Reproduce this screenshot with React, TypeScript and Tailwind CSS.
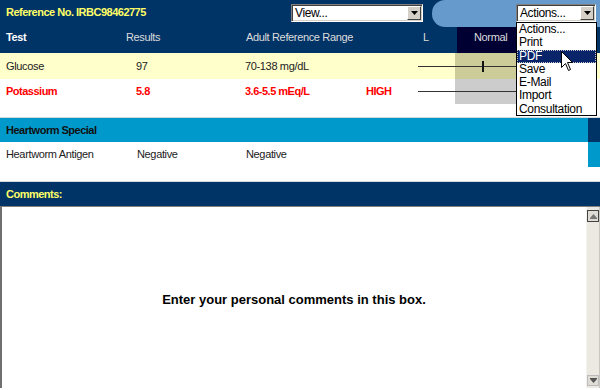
import React from "react";

function SelectBox({ label, width }: { label: string; width: string }) {
  return (
    <div
      className={`${width} h-[18px] flex bg-white border border-t-[#808080] border-l-[#808080] border-b-[#ffffff] border-r-[#ffffff] shadow-[inset_1px_1px_0_#404040,inset_-1px_-1px_0_#d4d0c8]`}
    >
      <div className="flex-1 pl-[3px] text-[12px] leading-[16px] tracking-[-0.4px] text-black">{label}</div>
      <div className="w-[14px] h-[14px] mt-[1px] mr-[1px] bg-[#d4d0c8] border border-t-[#ffffff] border-l-[#ffffff] border-b-[#404040] border-r-[#404040] flex items-center justify-center">
        <svg width="7" height="4" viewBox="0 0 7 4">
          <path d="M0 0 H7 L3.5 4 Z" fill="#000" />
        </svg>
      </div>
    </div>
  );
}

export default function App() {
  const items = ["Actions...", "Print", "PDF", "Save", "E-Mail", "Import", "Consultation"];
  return (
    <div className="relative w-[600px] h-[390px] overflow-hidden bg-white font-['Liberation_Sans',Arial,sans-serif]">
      {/* header */}
      <div className="flex h-[27px] bg-[#003366]">
        <div className="w-[291px] pl-[6px] pt-[6px] text-[11px] leading-[13px] font-bold tracking-[-0.5px] text-[#ffff66]">
          Reference No. IRBC98462775
        </div>
        <div className="w-[132px] pt-[4px]">
          <SelectBox label="View..." width="w-[132px]" />
        </div>
        <div className="ml-[9px] flex-1 bg-[#6699cc] rounded-l-[13px] pt-[4px] pl-[84px]">
          <SelectBox label="Actions..." width="w-[80px]" />
        </div>
      </div>

      {/* column headers */}
      <div className="flex h-[26px] bg-[#003366] text-[11px] leading-[13px] tracking-[-0.35px] text-[#dddddd]">
        <div className="w-[126px] pl-[6px] pt-[4px] font-bold text-white">Test</div>
        <div className="w-[120px] pt-[4px]">Results</div>
        <div className="w-[172px] pt-[4px]">Adult Reference Range</div>
        <div className="w-[39px] pl-[5px] pt-[4px]">L</div>
        <div className="w-[83px] pl-[17px] pt-[4px] bg-[#000033]">Normal</div>
        <div className="flex-1" />
      </div>

      {/* glucose */}
      <div className="relative flex h-[26px] bg-[#ffffcc] text-[11px] leading-[13px] tracking-[-0.35px] text-[#222222] items-center">
        <div className="w-[126px] pl-[6px]">Glucose</div>
        <div className="w-[119px] pl-[10px]">97</div>
        <div className="w-[121px]">70-138 mg/dL</div>
        <div className="w-[89px]" />
        <div className="w-[85px] h-full bg-[#cccc99]" />
        <div className="flex-1" />
        <div className="absolute left-[418px] top-[13px] w-[160px] h-[1px] bg-[#333333]" />
        <div className="absolute left-[482px] top-[8px] w-[2px] h-[11px] bg-[#111111]" />
      </div>

      {/* potassium */}
      <div className="relative flex h-[25px] bg-white text-[11px] leading-[13px] tracking-[-0.5px] font-bold text-[#ff0000] items-center">
        <div className="w-[126px] pl-[6px]">Potassium</div>
        <div className="w-[119px] pl-[10px]">5.8</div>
        <div className="w-[121px]">3.6-5.5 mEq/L</div>
        <div className="w-[89px]">HIGH</div>
        <div className="w-[85px] h-full bg-[#cccccc]" />
        <div className="flex-1" />
        <div className="absolute left-[418px] top-[12px] w-[160px] h-[1px] bg-[#333333]" />
      </div>

      <div className="h-[14px] border-b border-[#d0d8e0]" />

      {/* heartworm special */}
      <div className="flex h-[24px] bg-[#0099cc]">
        <div className="flex-1 pl-[6px] pt-[1px] flex items-center text-[11px] font-bold tracking-[-0.5px] text-[#111111]">
          Heartworm Special
        </div>
        <div className="w-[12px] bg-[#003366]" />
      </div>
      <div className="flex h-[25px] bg-white text-[11px] leading-[13px] tracking-[-0.35px] text-[#222222]">
        <div className="w-[137px] pl-[6px] flex items-center">Heartworm Antigen</div>
        <div className="w-[109px] flex items-center">Negative</div>
        <div className="flex-1 flex items-center">Negative</div>
        <div className="w-[12px] bg-[#0099cc]" />
      </div>

      <div className="h-[15px] border-b border-[#d0d8e0]" />

      {/* comments */}
      <div className="h-[24px] bg-[#003366] pl-[6px] pt-[1px] flex items-center text-[11px] font-bold tracking-[-0.5px] text-[#ffff66]">
        Comments:
      </div>

      <div className="flex h-[182px] border-t border-[#808080] border-l-2 border-l-[#707070]">
        <div className="flex-1 flex items-center justify-center pt-[4px] text-[13px] font-bold text-black">
          Enter your personal comments in this box.
        </div>
        <div className="w-[14px] bg-[#ebe9e2] border-l border-[#f4f3ee] border-r border-r-[#c8c6c0] flex flex-col justify-between pt-[3px] pb-[2px]">
          <div className="h-[12px] bg-[#dedcd4] border border-[#444444] flex items-center justify-center">
            <svg width="7" height="5" viewBox="0 0 7 5">
              <path d="M3.5 0 L7 4 H0 Z" fill="#777" />
              <rect x="0" y="4" width="7" height="1" fill="#777" />
            </svg>
          </div>
          <div className="h-[11px] bg-[#dedcd4] border border-[#bbbbbb] flex items-center justify-center">
            <svg width="7" height="5" viewBox="0 0 7 5">
              <rect x="0" y="0" width="7" height="1" fill="#555" />
              <path d="M0 1 H7 L3.5 5 Z" fill="#555" />
            </svg>
          </div>
        </div>
      </div>

      {/* dropdown list overlay */}
      <div className="absolute left-[516px] top-[22px] w-[81px] h-[94px] bg-white border border-black">
        {items.map((it) => (
          <div
            key={it}
            className={`h-[13.3px] pl-[2px] text-[12px] leading-[13.3px] tracking-[-0.3px] overflow-hidden ${
              it === "PDF" ? "bg-[#0a246a] text-white outline-1 outline-dotted outline-[#c8c8c8] -outline-offset-1" : "text-black"
            }`}
          >
            {it}
          </div>
        ))}
      </div>

      {/* cursor */}
      <svg className="absolute left-[561px] top-[51px]" width="13" height="21" viewBox="0 0 13 21">
        <path d="M0.5 0.5 L0.5 16.5 L4.5 12.5 L7.5 19.5 L9.5 18.5 L6.5 11.5 L11.5 11.5 Z" fill="#fff" stroke="#000" strokeWidth="1" />
      </svg>
    </div>
  );
}
